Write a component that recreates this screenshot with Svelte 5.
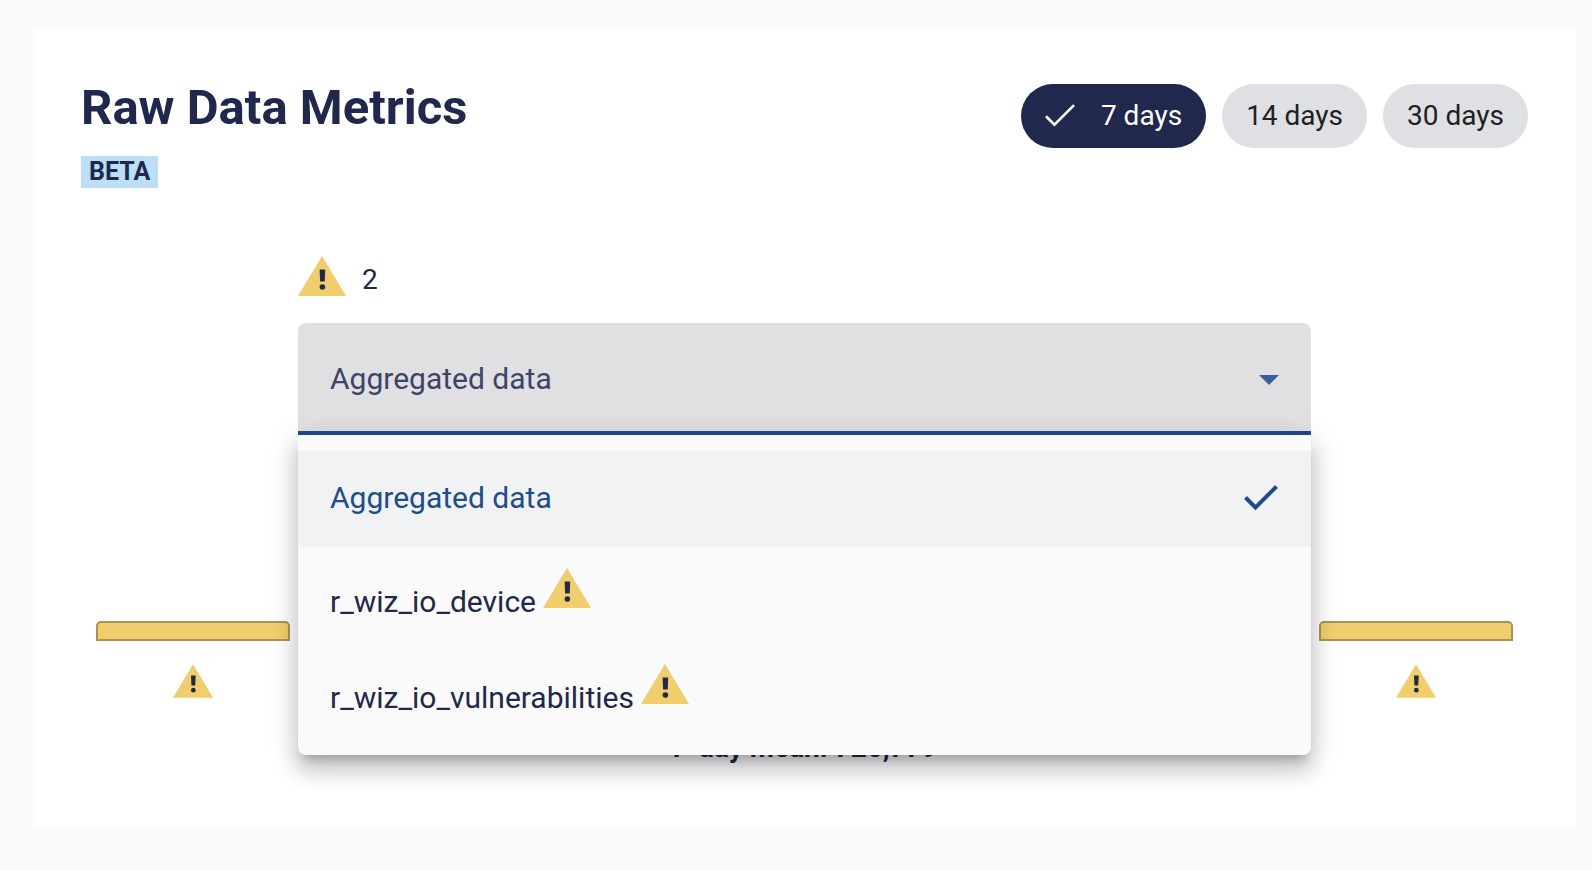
<script>
  const ranges = [7, 14, 30];
  const options = [
    { name: "Aggregated data", warning: false },
    { name: "r_wiz_io_device", warning: true },
    { name: "r_wiz_io_vulnerabilities", warning: true },
  ];
  const bars = [
    { height: 20, warning: true },
    { height: 20, warning: false },
    { height: 20, warning: false },
    { height: 20, warning: false },
    { height: 20, warning: false },
    { height: 20, warning: false },
    { height: 20, warning: true },
  ];

  let days = $state(7);
  let selected = $state("Aggregated data");
  let open = $state(true);

  function toggle(event) {
    // keep the native popup closed, we show our own list
    event.preventDefault();
    open = !open;
  }

  function choose(name) {
    selected = name;
    open = false;
  }
</script>

{#snippet warningIcon()}
  <svg class="warning" viewBox="0 0 48 40" role="img" aria-label="Warning">
    <path d="M24 0 48 40H0z" fill="#f0ce6b" />
    <path d="M21.6 13.5h5.6l-.5 12h-4.6z" fill="#20284d" />
    <circle cx="24.4" cy="31" r="2.8" fill="#20284d" />
  </svg>
{/snippet}

<main class="card">
  <header>
    <div>
      <h1>Raw Data Metrics</h1>
      <span class="badge">BETA</span>
    </div>
    <div class="chips">
      {#each ranges as range}
        <button
          class="chip"
          class:active={days === range}
          aria-pressed={days === range}
          onclick={() => (days = range)}>
          {#if days === range}
            <svg class="chipCheck" viewBox="-2 -3 30 30" aria-hidden="true">
              <path d="M1.73 12.91 8.1 19.28 22.79 4.59" fill="none" stroke="currentColor" stroke-width="2" />
            </svg>
          {/if}
          {range} days
        </button>
      {/each}
    </div>
  </header>

  <section class="source">
    <div class="count">
      {@render warningIcon()}
      <span>2</span>
    </div>
    <div class="dropdown">
      <select aria-label="Data source" bind:value={selected} onmousedown={toggle}>
        {#each options as option}
          <option>{option.name}</option>
        {/each}
      </select>
      <svg class="arrow" viewBox="0 0 20 10" aria-hidden="true">
        <path d="M0 0h20L10 10z" fill="#3860a0" />
      </svg>
      {#if open}
        <div class="menu">
          {#each options as option}
            <button
              class="item"
              class:selected={selected === option.name}
              onclick={() => choose(option.name)}>
              <span>
                {option.name}
                {#if option.warning}{@render warningIcon()}{/if}
              </span>
              {#if selected === option.name}
                <svg class="itemCheck" viewBox="0 0 34 26" aria-hidden="true">
                  <path d="M1.5 12.5 11.5 22.5 32.5 1.5" fill="none" stroke="currentColor" stroke-width="4" />
                </svg>
              {/if}
            </button>
          {/each}
        </div>
      {/if}
    </div>
  </section>

  <section class="chart">
    {#each bars as bar}
      <div class="day">
        <div class="bar" style="height: {bar.height}px"></div>
        {#if bar.warning}{@render warningIcon()}{/if}
      </div>
    {/each}
  </section>
  <p class="mean">{days}-day mean: 726,779</p>
</main>

<style>
  :global(body) {
    margin: 0;
    background-color: #fafafa;
  }

  .card {
    box-sizing: border-box;
    min-height: 800px;
    margin: 28px 16px 42px 33px;
    padding: 48px;
    background-color: white;
    color: #20284d;
    font-family: Roboto, "Liberation Sans", sans-serif;
    font-size: 28px;
  }

  button,
  select {
    border: none;
    font: inherit;
    color: inherit;
    cursor: pointer;
  }

  header {
    display: flex;
    justify-content: space-between;
    align-items: flex-start;
  }

  h1 {
    margin: 0 0 16px;
    font-size: 49px;
    line-height: 64px;
  }

  .badge {
    display: block;
    width: fit-content;
    padding: 0 8px;
    background-color: #bbdff8;
    font-size: 25px;
    font-weight: bold;
    line-height: 32px;
  }

  .chips {
    display: flex;
    gap: 16px;
    padding-top: 8px;
  }

  .chip {
    display: flex;
    align-items: center;
    height: 64px;
    padding: 0 24px 2px;
    border-radius: 32px;
    background-color: #dfe0e4;
    color: #212121;
  }

  .chip.active {
    background-color: #20284d;
    color: white;
  }

  .chipCheck {
    width: 40px;
    height: 40px;
    margin: 0 20px 0 -4px;
  }

  .warning {
    width: 48px;
    height: 40px;
  }

  .source {
    width: 70%;
    margin: 68px auto 0;
  }

  .count {
    display: flex;
    align-items: flex-end;
    gap: 16px;
    height: 40px;
    line-height: 32px;
  }

  .dropdown {
    position: relative;
    margin-top: 27px;
    font-size: 30px;
  }

  select {
    display: block;
    appearance: none;
    width: 100%;
    height: 112px;
    padding: 2px 80px 0 32px;
    border-bottom: 4px solid #204b8d;
    border-radius: 8px 8px 0 0;
    outline: none;
    background-color: #e0e0e2;
    color: #3d4467;
  }

  .arrow {
    position: absolute;
    top: 52px;
    right: 32px;
    width: 20px;
    height: 10px;
    pointer-events: none;
  }

  .menu {
    position: absolute;
    top: 100%;
    left: 0;
    z-index: 1;
    box-sizing: border-box;
    width: 100%;
    padding: 16px 0;
    border-radius: 0 0 8px 8px;
    background-color: #fafafa;
    box-shadow: 0 10px 10px -6px rgba(0, 0, 0, 0.2), 0 16px 20px 2px rgba(0, 0, 0, 0.14),
      0 6px 28px 4px rgba(0, 0, 0, 0.12);
  }

  .item {
    display: flex;
    justify-content: space-between;
    align-items: center;
    width: 100%;
    height: 96px;
    padding: 0 33px 3px 32px;
    background: none;
    text-align: left;
  }

  .item.selected {
    background-color: #f0f2f4;
    color: #204b8d;
  }

  .item .warning {
    vertical-align: 4px;
  }

  .itemCheck {
    width: 34px;
    height: 26px;
  }

  .chart {
    display: flex;
    gap: 10px;
    height: 80px;
    margin: 186px 15px 0;
  }

  .day {
    display: flex;
    flex: 1;
    flex-direction: column;
    align-items: center;
    gap: 23px;
  }

  .bar {
    box-sizing: border-box;
    width: 100%;
    border: 2px solid #a8935a;
    border-radius: 5px 5px 0 0;
    background-color: #f0ce6b;
  }

  .day .warning {
    width: 40px;
    height: 34px;
  }

  .mean {
    margin: 31px 0 0;
    font-weight: bold;
    line-height: 32px;
    text-align: center;
  }
</style>
